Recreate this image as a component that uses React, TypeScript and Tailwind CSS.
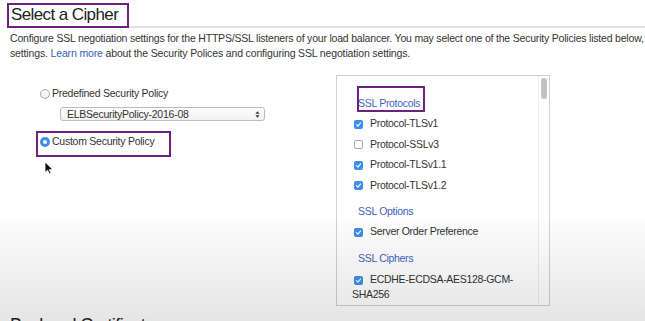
import React from 'react';

const CheckBox = ({ checked }: { checked: boolean }) =>
  checked ? (
    <span className="inline-flex items-center justify-center w-[9px] h-[9px] rounded-[2px] bg-[#3d8ef0] align-[-1px]">
      <svg viewBox="0 0 10 10" className="w-[7px] h-[7px]">
        <path d="M2 5.2 L4.2 7.3 L8 2.6" fill="none" stroke="#fff" strokeWidth="1.6" strokeLinecap="round" strokeLinejoin="round" />
      </svg>
    </span>
  ) : (
    <span className="inline-block w-[9px] h-[9px] rounded-[2px] border border-[#aaa] bg-white align-[-1px]" />
  );

const Row = ({ label, checked }: { label: string; checked: boolean }) => (
  <div className="h-[20.5px] flex items-center">
    <span className="ml-[2px] flex">
      <CheckBox checked={checked} />
    </span>
    <span className="ml-[7px]">{label}</span>
  </div>
);

const SectionTitle = ({ children }: { children: React.ReactNode }) => (
  <div className="h-[14px] leading-[14px] ml-[6px] text-[#3d63bf]">{children}</div>
);

export default function App() {
  return (
    <div className="relative w-[645px] h-[321px] overflow-hidden bg-white text-[#333] font-['Liberation_Sans',Arial,sans-serif]">
      {/* heading */}
      <div className="flex items-end pl-[7px] pt-[3px]">
        <div className="w-[122px] h-[25px] border-2 border-[#6c2180] pl-[2px] text-[17px] leading-[20px] tracking-[-0.6px] text-[#222]">
          Select a Cipher
        </div>
        <div className="flex-1 h-[2px] bg-[#e2e2e2]" />
      </div>

      <div className="mt-[3px] pl-[10px] text-[10.5px] leading-[15px] whitespace-nowrap">
        <div className="tracking-[-0.2px]">
          Configure SSL negotiation settings for the HTTPS/SSL listeners of your load balancer. You may select one of the Security Policies listed below,
        </div>
        <div className="tracking-[-0.15px]">
          settings. <span className="text-[#2f62b8]">Learn more</span> about the Security Polices and configuring SSL negotiation settings.
        </div>
      </div>

      <div className="flex">
        {/* left column */}
        <div className="w-[336px] pl-[36px] pt-[26px] text-[10.5px] tracking-[-0.25px]">
          <div className="h-[14px] flex items-center pl-[4px]">
            <span className="w-[10px] h-[10px] rounded-full border border-[#aaa] bg-gradient-to-b from-white to-[#eee]" />
            <span className="ml-[2px]">Predefined Security Policy</span>
          </div>
          <div className="mt-[6px] ml-[24px] w-[205px] h-[14px] rounded-[3px] border border-[#bcbcbc] bg-gradient-to-b from-white to-[#f1f1f1] flex items-center justify-between pl-[6px] pr-[4px]">
            <span className="leading-[12px]">ELBSecurityPolicy-2016-08</span>
            <svg viewBox="0 0 6 10" className="w-[5px] h-[9px]">
              <path d="M0.5 4 L3 1 L5.5 4 Z M0.5 6 L3 9 L5.5 6 Z" fill="#333" />
            </svg>
          </div>
          <div className="mt-[10px] w-[135px] h-[26px] border-2 border-[#6c2180] flex items-start pt-[2px] pl-[2px]">
            <div className="h-[14px] flex items-center">
              <span className="w-[10px] h-[10px] rounded-full bg-[#3b8ef0] flex items-center justify-center">
                <span className="w-[4px] h-[4px] rounded-full bg-white" />
              </span>
              <span className="ml-[2px]">Custom Security Policy</span>
            </div>
          </div>
          <div className="mt-[4px] ml-[8px]">
            <svg viewBox="0 0 10 14" className="w-[10px] h-[14px]">
              <path d="M1 1 L1 11.5 L3.6 9.2 L5.4 13 L7 12.3 L5.3 8.6 L8.8 8.4 Z" fill="#111" stroke="#fff" strokeWidth="0.8" />
            </svg>
          </div>
        </div>

        {/* right panel */}
        <div className="relative mt-[14px] w-[214px] h-[231px] border border-[#d0d0d0] bg-white flex text-[10.5px] tracking-[-0.3px]">
          <div className="flex-1 pl-[15px] pt-[20px]">
            <SectionTitle>SSL Protocols</SectionTitle>
            <div className="mt-[4px]">
              <Row label="Protocol-TLSv1" checked />
              <Row label="Protocol-SSLv3" checked={false} />
              <Row label="Protocol-TLSv1.1" checked />
              <Row label="Protocol-TLSv1.2" checked />
            </div>
            <div className="mt-[8px]">
              <SectionTitle>SSL Options</SectionTitle>
            </div>
            <div className="mt-[4px]">
              <Row label="Server Order Preference" checked />
            </div>
            <div className="mt-[8px]">
              <SectionTitle>SSL Ciphers</SectionTitle>
            </div>
            <div className="mt-[7px] leading-[15px]">
              <span className="ml-[2px] inline-block">
                <CheckBox checked />
              </span>
              <span className="ml-[7px]">ECDHE-ECDSA-AES128-GCM-</span>
              <br />
              SHA256
            </div>
          </div>
          <div className="w-[11px] border-l border-[#ededed] pt-[2px] flex justify-center">
            <div className="w-[6px] h-[21px] rounded-full bg-[#c2c2c2]" />
          </div>
          <div className="absolute left-[20px] top-[10px] w-[68px] h-[26px] border-2 border-[#6c2180]" />
        </div>
      </div>

      <div className="absolute left-[10px] top-[315px] text-[18px] leading-[20px] tracking-[-0.6px] text-[#222]">
        Backend Certificate
      </div>

      {/* video shading */}
      <div className="pointer-events-none absolute left-0 right-0 top-[221px] bottom-0 bg-gradient-to-b from-[rgba(0,0,0,0.01)] to-[rgba(0,0,0,0.1)]" />
    </div>
  );
}
